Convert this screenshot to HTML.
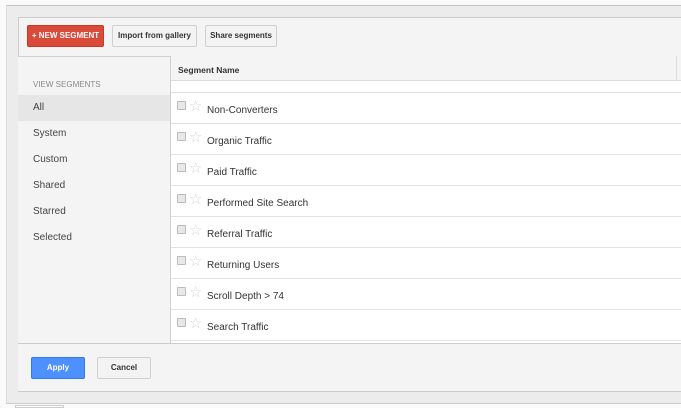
<!DOCTYPE html>
<html><head><style>
*{margin:0;padding:0;box-sizing:border-box}
body{width:681px;height:408px;background:#fafafa;font-family:"Liberation Sans",Arial,sans-serif;position:relative;overflow:hidden}
.outer{position:absolute;left:6px;top:5px;width:690px;height:399px;background:#ececec;border-top:1px solid #c4c4c4;border-left:1px solid #ddd;border-bottom:1px solid #ccc}
.inner{position:absolute;left:18px;top:17px;width:680px;height:375px;background:#f4f4f4;border:1px solid #ccc}
.btn{position:absolute;top:25px;height:22px;font-size:8px;font-weight:bold;line-height:20px;text-align:center;border-radius:2px}
.side{position:absolute;left:18px;top:56px;width:153px;height:287px;border-top:1px solid #d0d0d0;border-right:1px solid #d0d0d0;background:#f4f4f4}
.side div{position:absolute;left:15px;font-size:10px;color:#444}
.main{position:absolute;left:171px;top:56px;width:520px;height:287px;background:#fff}
.hdr{position:absolute;left:0;top:0;width:100%;height:25px;background:#f4f4f4;border-bottom:1px solid #ddd;font-size:8.5px;font-weight:bold;color:#333;padding:9px 0 0 7px}
.row{position:absolute;left:0;width:100%;height:31px;border-top:1px solid #e2e2e2;font-size:10px;color:#333}
.cb{position:absolute;left:6px;top:8px;width:9px;height:9px;border:1px solid #bbb;background:#e8e8e8;border-radius:1px}
.st{position:absolute;left:18px;top:4px;color:#d6d6d6;font-size:15px}
.tx{position:absolute;left:36px;top:12px}
.foot{position:absolute;left:18px;top:343px;width:680px;height:48px;border-top:1px solid #ccc;background:#f4f4f4}
</style></head><body>
<div class="outer"></div>
<div class="inner"></div>
<div class="btn" style="left:27px;width:77px;background:#d94a38;color:#fff;border:1px solid #c53727">+ NEW SEGMENT</div>
<div class="btn" style="left:112px;width:85px;background:#f3f3f3;color:#333;border:1px solid #d0d0d0">Import from gallery</div>
<div class="btn" style="left:205px;width:72px;background:#f3f3f3;color:#333;border:1px solid #d0d0d0">Share segments</div>
<div class="side">
<div style="top:23px;font-size:8px;color:#888">VIEW SEGMENTS</div>
<div style="left:0;top:38px;width:152px;height:26px;background:#e6e6e6"></div>
<div style="top:45px">All</div>
<div style="top:71px">System</div>
<div style="top:97px">Custom</div>
<div style="top:123px">Shared</div>
<div style="top:149px">Starred</div>
<div style="top:175px">Selected</div>
</div>
<div class="main">
<div class="hdr">Segment Name</div>
<div style="position:absolute;right:14px;top:0;width:1px;height:24px;background:#ddd"></div>
<div class="row" style="top:36px"><div class="cb"></div><span class="st">☆</span><span class="tx">Non-Converters</span></div>
<div class="row" style="top:67px"><div class="cb"></div><span class="st">☆</span><span class="tx">Organic Traffic</span></div>
<div class="row" style="top:98px"><div class="cb"></div><span class="st">☆</span><span class="tx">Paid Traffic</span></div>
<div class="row" style="top:129px"><div class="cb"></div><span class="st">☆</span><span class="tx">Performed Site Search</span></div>
<div class="row" style="top:160px"><div class="cb"></div><span class="st">☆</span><span class="tx">Referral Traffic</span></div>
<div class="row" style="top:191px"><div class="cb"></div><span class="st">☆</span><span class="tx">Returning Users</span></div>
<div class="row" style="top:222px"><div class="cb"></div><span class="st">☆</span><span class="tx">Scroll Depth &gt; 74</span></div>
<div class="row" style="top:253px"><div class="cb"></div><span class="st">☆</span><span class="tx">Search Traffic</span></div>
<div class="row" style="top:284px"></div>
</div>
<div class="foot"></div>
<div class="btn" style="top:357px;left:31px;width:54px;background:#4d90fe;color:#fff;border:1px solid #3079ed">Apply</div>
<div class="btn" style="top:357px;left:97px;width:54px;background:#f3f3f3;color:#333;border:1px solid #d0d0d0">Cancel</div>
<div style="position:absolute;left:15px;top:405px;width:49px;height:3px;background:#fff;border:1px solid #ccc"></div>
</body></html>
